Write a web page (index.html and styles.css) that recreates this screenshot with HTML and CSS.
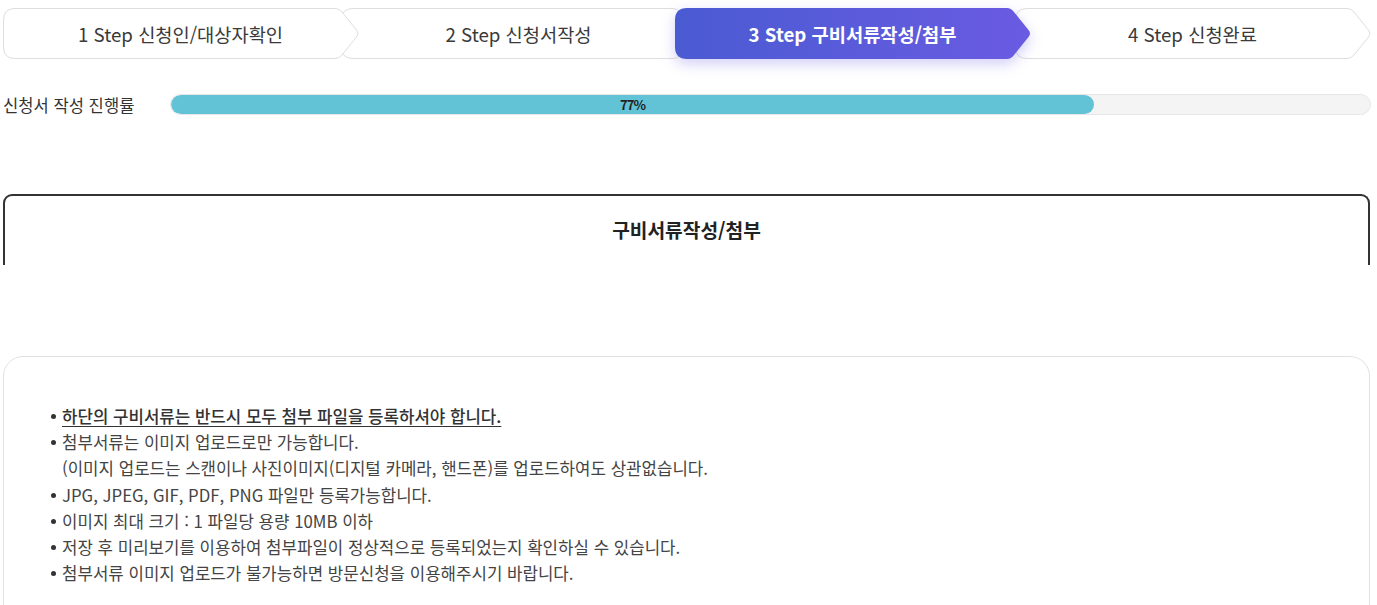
FILE: index.html
```html
<!DOCTYPE html>
<html lang="ko">
<head>
<meta charset="utf-8">
<title>구비서류작성/첨부</title>
<link rel="stylesheet" href="styles.css">
</head>
<body>
<div class="page">
  <ol class="steps">
    <li class="step step-1">
      <svg class="step-shape" width="357" height="51" viewBox="0 0 357 51"><path class="shape-idle" d="M12 0.5 H332 Q336 0.5 339 4 L353.5 22 Q356.5 25.5 353.5 29 L339 47 Q336 50.5 332 50.5 H12 Q0.5 50.5 0.5 39 V12 Q0.5 0.5 12 0.5 Z"/></svg>
      <span class="step-label">1 Step 신청인/대상자확인</span>
    </li>
    <li class="step step-2">
      <svg class="step-shape" width="357" height="51" viewBox="0 0 357 51"><path class="shape-idle" d="M12 0.5 H332 Q336 0.5 339 4 L353.5 22 Q356.5 25.5 353.5 29 L339 47 Q336 50.5 332 50.5 H12 Q0.5 50.5 0.5 39 V12 Q0.5 0.5 12 0.5 Z"/></svg>
      <span class="step-label">2 Step 신청서작성</span>
    </li>
    <li class="step step-3 is-active">
      <svg class="step-shape" width="357" height="51" viewBox="0 0 357 51">
        <defs><linearGradient id="act" x1="0" y1="0" x2="1" y2="0"><stop offset="0" stop-color="#4a5bd2"/><stop offset="1" stop-color="#6a5be2"/></linearGradient></defs>
        <path class="shape-active" d="M12 0 H332 Q336 0 339 4 L353.5 22 Q356.5 25.5 353.5 29 L339 47 Q336 51 332 51 H12 Q0 51 0 39 V12 Q0 0 12 0 Z"/></svg>
      <span class="step-label">3 Step 구비서류작성/첨부</span>
    </li>
    <li class="step step-4">
      <svg class="step-shape" width="357" height="51" viewBox="0 0 357 51"><path class="shape-idle" d="M12 0.5 H332 Q336 0.5 339 4 L353.5 22 Q356.5 25.5 353.5 29 L339 47 Q336 50.5 332 50.5 H12 Q0.5 50.5 0.5 39 V12 Q0.5 0.5 12 0.5 Z"/></svg>
      <span class="step-label">4 Step 신청완료</span>
    </li>
  </ol>

  <div class="progress-row">
    <span class="progress-label">신청서 작성 진행률</span>
    <div class="progress-track">
      <div class="progress-fill" style="width:77%"><span class="progress-value">77%</span></div>
    </div>
  </div>

  <section class="doc-box">
    <h2 class="doc-title">구비서류작성/첨부</h2>
  </section>

  <section class="notice-box">
    <ul class="notice-list">
      <li class="strong">하단의 구비서류는 반드시 모두 첨부 파일을 등록하셔야 합니다.</li>
      <li>첨부서류는 이미지 업로드로만 가능합니다.<br>(이미지 업로드는 스캔이나 사진이미지(디지털 카메라, 핸드폰)를 업로드하여도 상관없습니다.</li>
      <li>JPG, JPEG, GIF, PDF, PNG 파일만 등록가능합니다.</li>
      <li>이미지 최대 크기 : 1 파일당 용량 10MB 이하</li>
      <li>저장 후 미리보기를 이용하여 첨부파일이 정상적으로 등록되었는지 확인하실 수 있습니다.</li>
      <li>첨부서류 이미지 업로드가 불가능하면 방문신청을 이용해주시기 바랍니다.</li>
    </ul>
  </section>
</div>
</body>
</html>
```

FILE: styles.css
```css
* { box-sizing: border-box; }
html, body { margin: 0; padding: 0; background: #fff; }
body {
  font-family: "Noto Sans CJK KR", "Noto Sans", sans-serif;
  color: #333;
  overflow: hidden;
}
.page { padding: 8px 7px 0 3px; }

.steps {
  list-style: none;
  margin: 0;
  padding: 0;
  display: flex;
  height: 51px;
}
.step {
  position: relative;
  flex: 0 0 357px;
  height: 51px;
  display: flex;
  align-items: center;
  justify-content: center;
}
.step + .step { margin-left: -19px; }
.step.step-1 { z-index: 4; }
.step.step-2 { z-index: 3; }
.step.step-3 { z-index: 5; margin-left: -23px; }
.step.step-4 { z-index: 1; margin-left: -17px; }
.step-shape {
  position: absolute;
  left: 0;
  top: 0;
  overflow: visible;
}
.shape-idle { fill: #fff; stroke: #dedede; stroke-width: 1; }
.shape-active { fill: url(#act); stroke: none; }
.is-active .step-shape { filter: drop-shadow(0 5px 7px rgba(92, 84, 220, 0.28)); }
.step-label {
  position: relative;
  font-size: 18.7px;
  color: #3a3a3a;
  padding-right: 2px;
  margin-top: -1px;
}
.is-active .step-label { color: #fff; font-weight: 700; }

.progress-row {
  display: flex;
  align-items: center;
  margin-top: 35px;
  height: 21px;
}
.progress-label {
  width: 167px;
  font-size: 16.6px;
  color: #333;
}
.progress-track {
  flex: 1;
  height: 21px;
  background: #f4f4f4;
  border: 1px solid #e6e6e6;
  border-radius: 11px;
  overflow: hidden;
  margin-right: -1px;
}
.progress-fill {
  height: 100%;
  background: #63c3d6;
  border-radius: 11px;
  display: flex;
  align-items: center;
  justify-content: center;
}
.progress-value {
  font-size: 13px;
  font-weight: 700;
  color: #222;
  letter-spacing: -0.8px;
}

.doc-box {
  margin-top: 79px;
  height: 71px;
  border: 2px solid #333;
  border-bottom: none;
  border-radius: 9px 9px 0 0;
  display: flex;
  justify-content: center;
  padding-top: 20px;
}
.doc-title {
  margin: 0;
  font-size: 19.2px;
  font-weight: 700;
  color: #222;
}

.notice-box {
  margin-top: 91px;
  height: 300px;
  border: 1px solid #e2e2e2;
  border-radius: 20px;
  padding: 46px 0 0 47px;
}
.notice-list {
  margin: 0;
  padding: 0;
  list-style: none;
}
.notice-list li {
  position: relative;
  padding-left: 11px;
  font-size: 16.8px;
  line-height: 26.2px;
  color: #444;
}
.notice-list li::before {
  content: "";
  position: absolute;
  left: 0;
  top: 11px;
  width: 5px;
  height: 5px;
  border-radius: 50%;
  background: #333;
}
.notice-list li.strong {
  font-weight: 500;
  color: #333;
  text-decoration: underline;
  text-underline-offset: 3px;
}
```
